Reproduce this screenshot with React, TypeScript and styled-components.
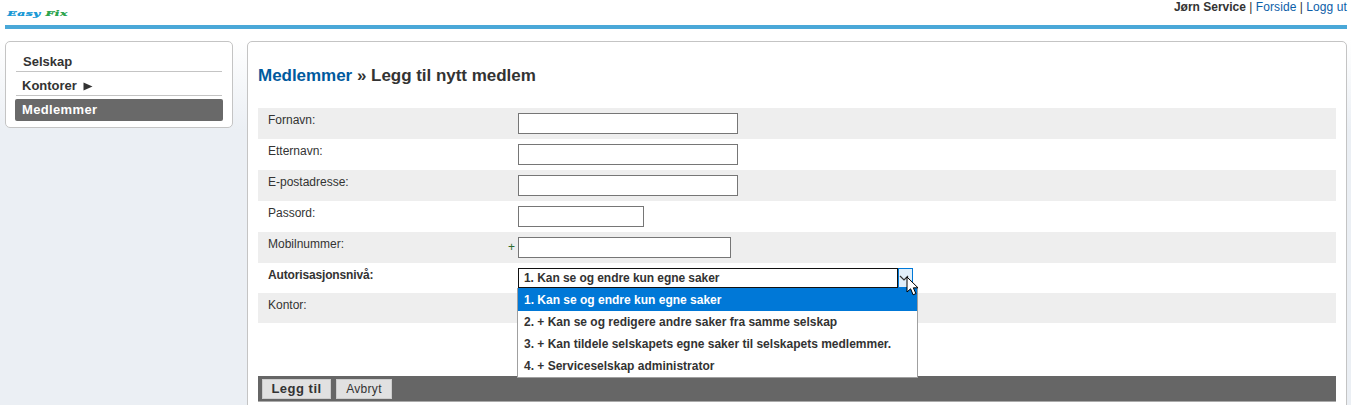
import React from "react";
import styled, { createGlobalStyle } from "styled-components";

const Global = createGlobalStyle`
  html, body { margin: 0; padding: 0; height: 100%; overflow: hidden; }
  body {
    font-family: "Liberation Sans", Arial, sans-serif;
    color: #333;
    background: linear-gradient(to bottom, #ffffff 0, #ffffff 40px, #ebeff4 130px, #ebeff4 100%);
  }
`;

const Page = styled.div`
  width: 1351px;
  height: 405px;
  padding: 0 4px 0 5px;
  box-sizing: border-box;
  overflow: hidden;
`;

const Header = styled.header`
  height: 25px;
  border-bottom: 4px solid #4aa8d8;
  display: flex;
  justify-content: space-between;
  align-items: flex-start;
`;

const Logo = styled.div`
  font-family: "DejaVu Serif", serif;
  font-weight: 700;
  font-style: italic;
  font-size: 8px;
  line-height: 10px;
  margin: 8px 0 0 2px;
  letter-spacing: 0.3px;
  color: #1c9ad6;
  text-shadow: 0.3px 0 0 currentColor;
  transform: scaleX(1.55);
  transform-origin: left center;
`;

const LogoGreen = styled.span`
  color: #2ea54f;
`;

const UserBar = styled.div`
  font-size: 12px;
  line-height: 15px;
  color: #333;
`;

const UserName = styled.strong`
  font-weight: 700;
`;

const TopLink = styled.a`
  color: #0b5ea8;
  text-decoration: none;
  letter-spacing: 0.1px;
`;

const Columns = styled.div`
  display: flex;
  align-items: flex-start;
  gap: 14px;
  margin-top: 12px;
`;

const SideBox = styled.nav`
  width: 228px;
  height: 87px;
  box-sizing: border-box;
  background: #fff;
  border: 1px solid #c4c4c4;
  border-radius: 5px;
  padding: 10px 9px 0;
`;

const SideItem = styled.div<{ $indent: number; $top: number }>`
  margin: 0 1px;
  box-sizing: border-box;
  padding-left: ${(p) => p.$indent}px;
  padding-top: ${(p) => p.$top}px;
  height: ${(p) => 20 + p.$top}px;
  border-bottom: 1px solid #c4c4c4;
  font-size: 13px;
  font-weight: 700;
  line-height: 19px;
  color: #333;
`;

const SideArrow = styled.svg`
  margin-left: 6px;
  vertical-align: -1px;
`;

const SideActive = styled.div`
  height: 22px;
  margin-top: 3px;
  padding-left: 7px;
  border-radius: 2px;
  background: #696969;
  color: #fff;
  font-size: 13px;
  font-weight: 700;
  letter-spacing: 0.35px;
  line-height: 22px;
`;

const Main = styled.main`
  width: 1100px;
  height: 380px;
  box-sizing: border-box;
  background: #fff;
  border: 1px solid #c4c4c4;
  border-radius: 5px;
  padding: 0 10px;
`;

const Title = styled.h1`
  margin: 24px 0 23px;
  font-size: 17px;
  line-height: 19px;
  font-weight: 700;
  letter-spacing: -0.03px;
  color: #333;
`;

const TitleLink = styled.a`
  color: #005a9e;
`;

const Form = styled.div`
  position: relative;
`;

const Row = styled.div<{ $shaded?: boolean; $height?: number }>`
  height: ${(p) => p.$height ?? 31}px;
  display: grid;
  grid-template-columns: 260px 1fr;
  background: ${(p) => (p.$shaded ? "#eeeeee" : "#ffffff")};
`;

const Label = styled.div<{ $bold?: boolean }>`
  padding: 5px 0 0 10px;
  font-size: 12px;
  line-height: 14px;
  font-weight: ${(p) => (p.$bold ? 700 : 400)};
  letter-spacing: ${(p) => (p.$bold ? "-0.15px" : "0")};
  color: #333;
`;

const Field = styled.div`
  position: relative;
  padding-top: 5px;
`;

const TextInput = styled.input<{ $width: number }>`
  display: block;
  width: ${(p) => p.$width}px;
  height: 21px;
  box-sizing: border-box;
  padding: 0 3px;
  border: 1px solid #767676;
  background: #fff;
  outline: none;
`;

const Plus = styled.span`
  position: absolute;
  left: -10px;
  top: 8px;
  font-size: 12px;
  line-height: 14px;
  color: #2e6b2e;
`;

const SelectBox = styled.div`
  display: flex;
  width: 395px;
  height: 20px;
  box-sizing: border-box;
`;

const SelectValue = styled.div`
  width: 380px;
  box-sizing: border-box;
  border: 1px solid #111;
  padding-left: 5px;
  font-size: 12px;
  font-weight: 700;
  letter-spacing: -0.06px;
  line-height: 18px;
  color: #333;
  background: #fff;
`;

const SelectArrow = styled.div`
  width: 15px;
  box-sizing: border-box;
  border: 1px solid #0078d7;
  background: #e1effa;
  display: flex;
  align-items: center;
  justify-content: flex-start;
`;

const OptionList = styled.ul`
  position: absolute;
  left: -1px;
  top: 25px;
  z-index: 2;
  width: 401px;
  margin: 0;
  padding: 0;
  list-style: none;
  box-sizing: border-box;
  border: 1px solid #a0a0a0;
  border-top: 0;
  background: #fff;
`;

const Option = styled.li<{ $active?: boolean }>`
  height: ${(p) => (p.$active ? 23 : 22)}px;
  box-sizing: border-box;
  padding-left: 6px;
  padding-top: ${(p) => (p.$active ? 1 : 0)}px;
  font-size: 12px;
  font-weight: 700;
  line-height: 22px;
  color: ${(p) => (p.$active ? "#fff" : "#333")};
  background: ${(p) => (p.$active ? "#0078d7" : "#fff")};
`;

const Cursor = styled.svg`
  position: absolute;
  left: 388px;
  top: 13px;
  z-index: 3;
`;

const Spacer = styled.div`
  height: 53px;
`;

const ActionBar = styled.div`
  height: 26px;
  box-sizing: border-box;
  padding: 3px 4px 0;
  background: #666;
  border-bottom: 1px solid #aaa;
  display: flex;
  gap: 5px;
  align-items: flex-start;
`;

const ActionButton = styled.button<{ $primary?: boolean; $width: number }>`
  width: ${(p) => p.$width}px;
  height: 20px;
  padding: 0;
  box-sizing: border-box;
  border: 1px solid #ccc;
  background: #e1e1e1;
  color: #333;
  font-family: "Liberation Sans", Arial, sans-serif;
  font-weight: ${(p) => (p.$primary ? 700 : 400)};
  font-size: ${(p) => (p.$primary ? 13 : 12)}px;
  letter-spacing: ${(p) => (p.$primary ? "0.5px" : "0.3px")};
  line-height: 18px;
`;

const fields = [
  { label: "Fornavn:", width: 220, shaded: true },
  { label: "Etternavn:", width: 220, shaded: false },
  { label: "E-postadresse:", width: 220, shaded: true },
  { label: "Passord:", width: 126, shaded: false },
];

const options = [
  "1. Kan se og endre kun egne saker",
  "2. + Kan se og redigere andre saker fra samme selskap",
  "3. + Kan tildele selskapets egne saker til selskapets medlemmer.",
  "4. + Serviceselskap administrator",
];

export default function App() {
  return (
    <Page>
      <Global />
      <Header>
        <Logo>
          Easy <LogoGreen>Fix</LogoGreen>
        </Logo>
        <UserBar>
          <UserName>Jørn Service</UserName> | <TopLink>Forside</TopLink> | <TopLink>Logg ut</TopLink>
        </UserBar>
      </Header>
      <Columns>
        <SideBox>
          <SideItem $indent={7} $top={0}>Selskap</SideItem>
          <SideItem $indent={6} $top={4}>
            Kontorer
            <SideArrow width="10" height="9" viewBox="0 0 10 9">
              <path d="M0.5 0.5L9.5 4.5L0.5 8.5z" fill="#333" />
            </SideArrow>
          </SideItem>
          <SideActive>Medlemmer</SideActive>
        </SideBox>
        <Main>
          <Title>
            <TitleLink>Medlemmer</TitleLink> » Legg til nytt medlem
          </Title>
          <Form>
            {fields.map((f) => (
              <Row key={f.label} $shaded={f.shaded}>
                <Label>{f.label}</Label>
                <Field>
                  <TextInput $width={f.width} />
                </Field>
              </Row>
            ))}
            <Row $shaded>
              <Label>Mobilnummer:</Label>
              <Field>
                <Plus>+</Plus>
                <TextInput $width={213} />
              </Field>
            </Row>
            <Row $height={30}>
              <Label $bold>Autorisasjonsnivå:</Label>
              <Field>
                <SelectBox>
                  <SelectValue>{options[0]}</SelectValue>
                  <SelectArrow>
                    <svg width="10" height="6" viewBox="0 0 10 6">
                      <path d="M1 1l4 4 4-4" fill="none" stroke="#333" strokeWidth="1.2" />
                    </svg>
                  </SelectArrow>
                </SelectBox>
                <OptionList>
                  {options.map((o, i) => (
                    <Option key={o} $active={i === 0}>
                      {o}
                    </Option>
                  ))}
                </OptionList>
                <Cursor width="14" height="20" viewBox="0 0 14 20">
                  <path d="M1 1v15l3.6-3.2 2.5 6 2.8-1.2-2.6-5.8H12z" fill="#fff" stroke="#000" strokeWidth="1" />
                </Cursor>
              </Field>
            </Row>
            <Row $shaded $height={30}>
              <Label>Kontor:</Label>
              <Field />
            </Row>
            <Spacer />
            <ActionBar>
              <ActionButton $primary $width={69}>Legg til</ActionButton>
              <ActionButton $width={56}>Avbryt</ActionButton>
            </ActionBar>
          </Form>
        </Main>
      </Columns>
    </Page>
  );
}
